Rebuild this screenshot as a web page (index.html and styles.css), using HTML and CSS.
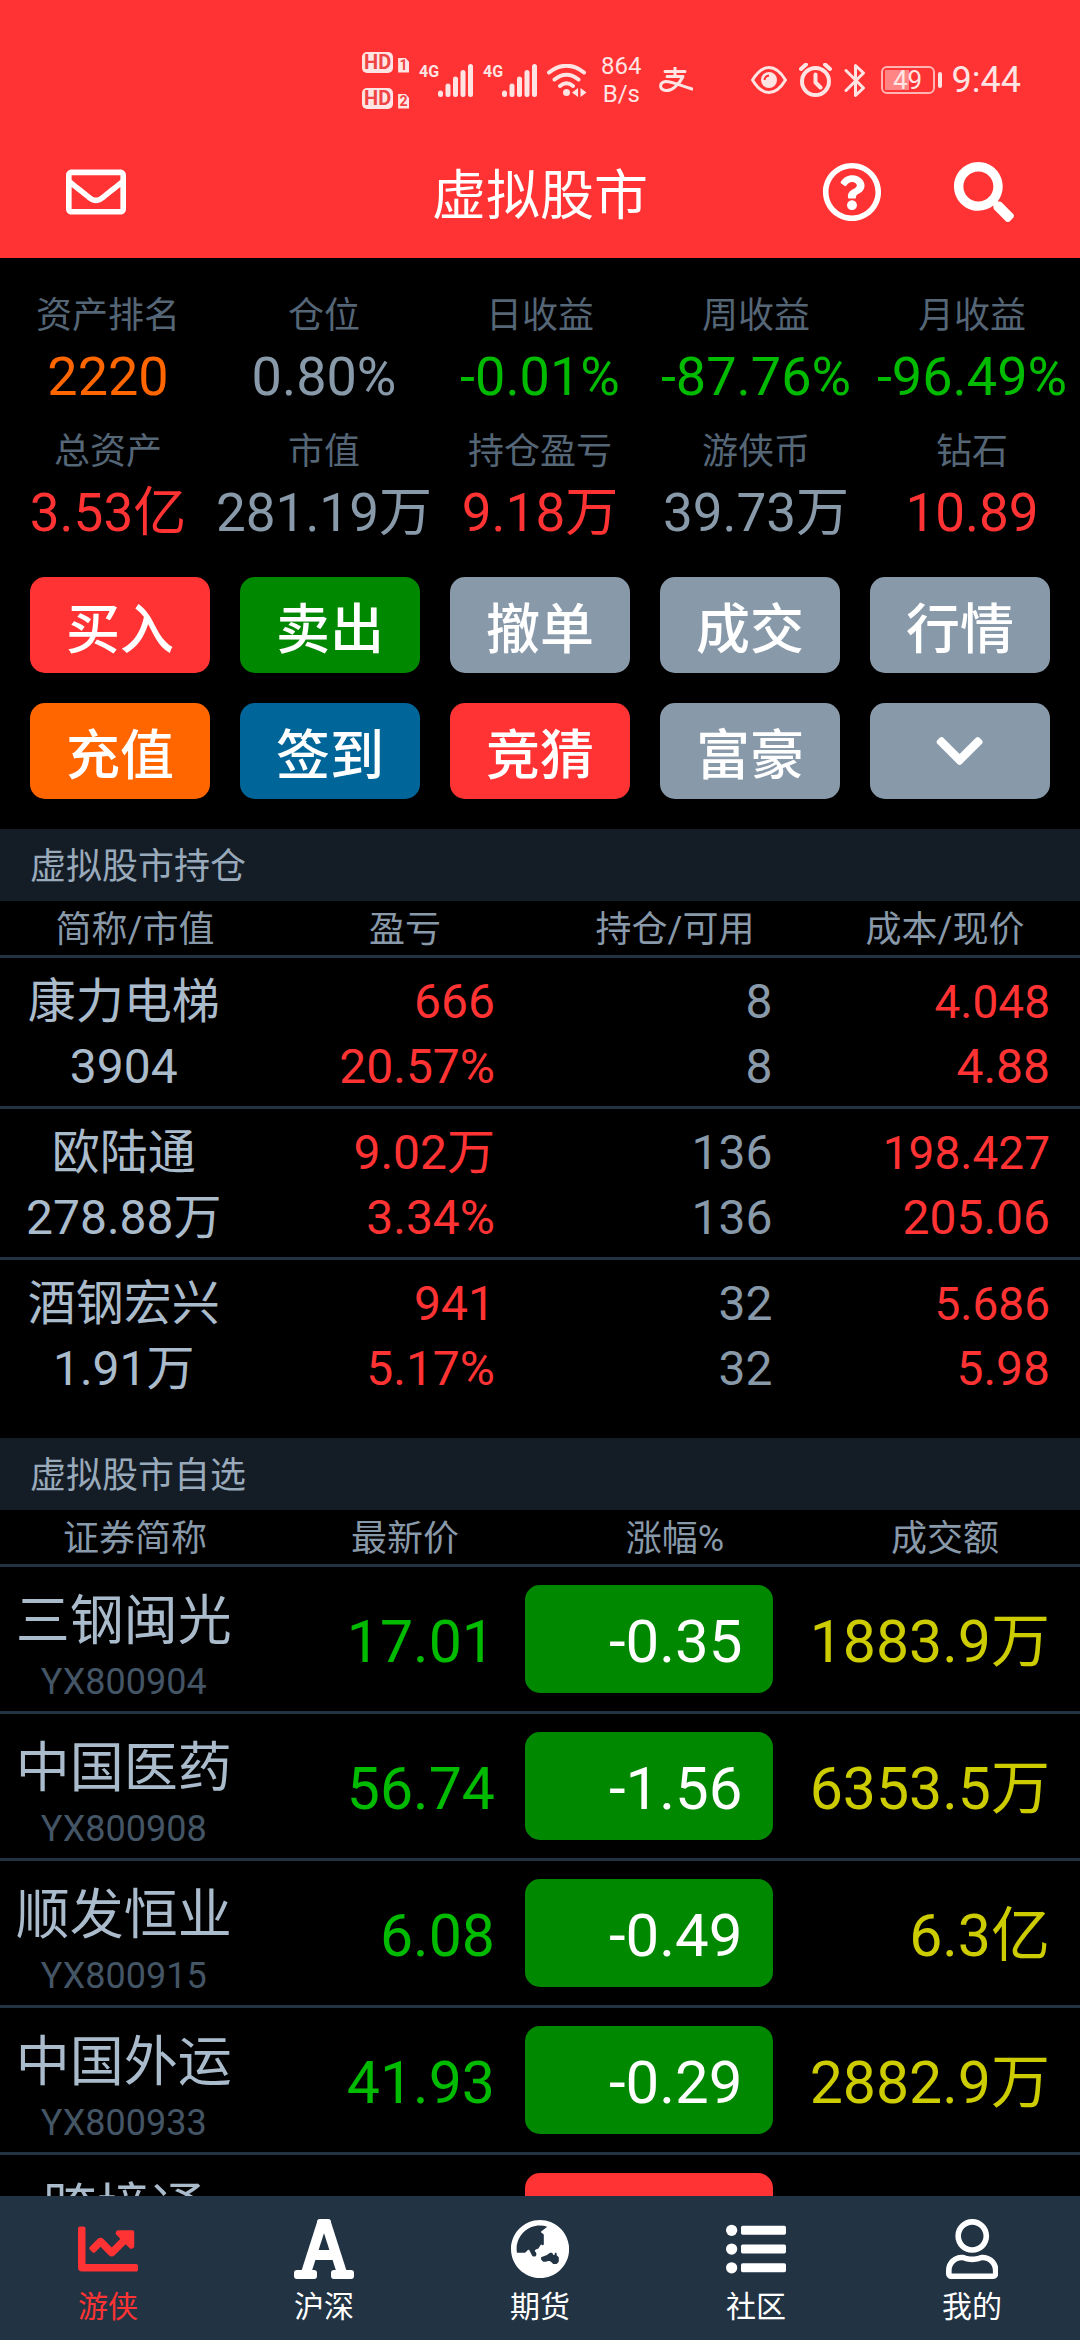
FILE: index.html
```html
<!DOCTYPE html>
<html lang="zh-CN">
<head>
<meta charset="utf-8">
<meta name="viewport" content="width=device-width, initial-scale=1.0">
<title>虚拟股市</title>
<link rel="stylesheet" href="styles.css">
</head>

<body>

  <header class="header">
    <div class="status">
      <div class="hd-group">
        <div class="hd-row"><span class="hd">HD</span><span class="sim">1</span></div>
        <div class="hd-row"><span class="hd">HD</span><span class="sim">2</span></div>
      </div>
      <div class="signal">
        <span class="signal-type">4G</span>
        <svg width="35" height="33" viewBox="0 0 35 33"><path d="M2.5 29v1.500M10 22v8.500M17.500 15v15.500M25 8.500v22M32.500 2.500v28" /></svg>
      </div>
      <div class="signal">
        <span class="signal-type">4G</span>
        <svg width="35" height="33" viewBox="0 0 35 33"><path d="M2.5 29v1.500M10 22v8.500M17.500 15v15.500M25 8.500v22M32.500 2.500v28" /></svg>
      </div>
      <svg class="wifi" width="40" height="33" viewBox="0 0 40 33">
        <path class="line" d="M2 8.500Q19.500-5 37 8.500M7.500 15.500Q19.500 6 31.500 15.500M13 22Q19.500 16.500 26 22" />
        <circle cx="19.500" cy="28.500" r="3.500" />
        <path d="M31 24v9l-6-4.500zM33.500 24l6 4.500-6 4.500z" />
      </svg>
      <div class="speed">864<br>B/s</div>
      <svg class="alipay" width="34" height="26" viewBox="0 0 34 26">
        <path class="line" d="M6 4.500h20M16 0v9.500M8 9.500h16C20 18 12 24.500 6.500 23.500 0 22.500 0 15.500 6.500 14.500 13 14 22 19 33 22" />
      </svg>
      <svg class="eye" width="36" height="28" viewBox="0 0 36 28">
        <path class="line" d="M1.500 14Q9 1.500 18 1.500T34.500 14Q27 26.500 18 26.500T1.500 14z" />
        <circle cx="18" cy="14" r="8" />
        <path class="glint" d="M13.500 14q.5-4 4.500-4.500" />
      </svg>
      <svg class="alarm" width="33" height="34" viewBox="0 0 33 34">
        <circle class="line" cx="16.500" cy="18.500" r="13.500" />
        <path class="line" d="M16.500 11.500v8l5 5M2 6l5-4.500M31 6l-5-4.500" />
      </svg>
      <svg class="bluetooth" width="22" height="35" viewBox="0 0 22 35">
        <path class="line" d="M2 7.500l17.500 17.500-8 7.500V2.500l8 7.500L2 27.500" />
      </svg>
      <div class="battery"><span class="battery-box">49</span><span class="battery-nub"></span></div>
      <span class="clock">9:44</span>
    </div>

    <div class="titlebar">
      <button class="icon-button" aria-label="消息">
        <svg viewBox="0 0 512 512"><path d="M464 64H48C21.49 64 0 85.49 0 112v288c0 26.51 21.49 48 48 48h416c26.51 0 48-21.49 48-48V112c0-26.51-21.49-48-48-48zm0 48v40.805c-22.422 18.259-58.168 46.651-134.587 106.49-16.841 13.247-50.201 45.072-73.413 44.701-23.208.375-56.579-31.459-73.413-44.701C106.18 199.465 70.425 171.067 48 152.805V112h416zM48 400V214.398c22.914 18.251 55.409 43.862 104.938 82.646 21.857 17.205 60.134 55.186 103.062 54.955 42.717.231 80.509-37.199 103.053-54.947 49.528-38.783 82.032-64.401 104.947-82.653V400H48z"/></svg>
      </button>
      <h1 class="title">虚拟股市</h1>
      <div class="titlebar-right">
        <button class="icon-button" aria-label="帮助">
          <svg viewBox="0 0 512 512"><path d="M256 8C119.043 8 8 119.083 8 256c0 136.997 111.043 248 248 248s248-111.003 248-248C504 119.083 392.957 8 256 8zm0 448c-110.532 0-200-89.431-200-200 0-110.495 89.472-200 200-200 110.491 0 200 89.471 200 200 0 110.530-89.431 200-200 200zm107.244-255.200c0 67.052-72.421 68.084-72.421 92.863V300c0 6.627-5.373 12-12 12h-45.647c-6.627 0-12-5.373-12-12v-8.659c0-35.745 27.100-50.034 47.579-61.516 17.561-9.845 28.324-16.541 28.324-29.579 0-17.246-21.999-28.693-39.784-28.693-23.189 0-33.894 10.977-48.942 29.969-4.057 5.120-11.460 6.071-16.666 2.124l-27.824-21.098c-5.107-3.872-6.251-11.066-2.644-16.363C184.846 131.491 214.940 112 261.794 112c49.071 0 101.450 38.304 101.450 88.800zM298 368c0 23.159-18.841 42-42 42s-42-18.841-42-42 18.841-42 42-42 42 18.841 42 42z"/></svg>
        </button>
        <button class="icon-button" aria-label="搜索">
          <svg viewBox="0 0 512 512"><path d="M505 442.700L405.300 343c-4.500-4.500-10.600-7-17-7H372c27.600-35.300 44-79.700 44-128C416 93.100 322.900 0 208 0S0 93.100 0 208s93.100 208 208 208c48.300 0 92.700-16.400 128-44v16.300c0 6.400 2.500 12.500 7 17l99.700 99.700c9.400 9.400 24.600 9.400 33.900 0l28.300-28.300c9.400-9.400 9.400-24.600.1-34zM208 336c-70.700 0-128-57.200-128-128 0-70.700 57.200-128 128-128 70.700 0 128 57.200 128 128 0 70.700-57.200 128-128 128z"/></svg>
        </button>
      </div>
    </div>
  </header>

  <main class="content">
    <dl class="stats">
      <div><dt>资产排名</dt><dd class="orange">2220</dd></div>
      <div><dt>仓位</dt><dd>0.80%</dd></div>
      <div><dt>日收益</dt><dd class="green">-0.01%</dd></div>
      <div><dt>周收益</dt><dd class="green">-87.76%</dd></div>
      <div><dt>月收益</dt><dd class="green">-96.49%</dd></div>
      <div><dt>总资产</dt><dd class="amount red">3.53亿</dd></div>
      <div><dt>市值</dt><dd class="amount">281.19万</dd></div>
      <div><dt>持仓盈亏</dt><dd class="amount red">9.18万</dd></div>
      <div><dt>游侠币</dt><dd class="amount">39.73万</dd></div>
      <div><dt>钻石</dt><dd class="amount red">10.89</dd></div>
    </dl>

    <div class="actions">
      <button class="bg-red">买入</button>
      <button class="bg-green">卖出</button>
      <button>撤单</button>
      <button>成交</button>
      <button>行情</button>
      <button class="bg-orange">充值</button>
      <button class="bg-blue">签到</button>
      <button class="bg-red">竞猜</button>
      <button>富豪</button>
      <button aria-label="更多">
        <svg viewBox="0 0 448 512"><path d="M207.029 381.476L12.686 187.132c-9.373-9.373-9.373-24.569 0-33.941l22.667-22.667c9.357-9.357 24.522-9.375 33.901-.04L224 284.505l154.745-154.021c9.379-9.335 24.544-9.317 33.901.04l22.667 22.667c9.373 9.373 9.373 24.569 0 33.941L240.971 381.476c-9.373 9.372-24.569 9.372-33.942 0z"/></svg>
      </button>
    </div>

    <h2 class="section">虚拟股市持仓</h2>
    <table class="holdings">
      <thead>
        <tr><th>简称/市值</th><th>盈亏</th><th>持仓/可用</th><th>成本/现价</th></tr>
      </thead>
      <tbody>
        <tr>
          <td>康力电梯<br>3904</td>
          <td class="red">666<br>20.57%</td>
          <td>8<br>8</td>
          <td class="red"><span class="cost">4.048</span><br>4.88</td>
        </tr>
        <tr>
          <td>欧陆通<br>278.88万</td>
          <td class="red">9.02万<br>3.34%</td>
          <td>136<br>136</td>
          <td class="red"><span class="cost">198.427</span><br>205.06</td>
        </tr>
        <tr>
          <td>酒钢宏兴<br>1.91万</td>
          <td class="red">941<br>5.17%</td>
          <td>32<br>32</td>
          <td class="red"><span class="cost">5.686</span><br>5.98</td>
        </tr>
      </tbody>
    </table>

    <h2 class="section">虚拟股市自选</h2>
    <table class="watchlist">
      <thead>
        <tr><th>证券简称</th><th>最新价</th><th>涨幅%</th><th>成交额</th></tr>
      </thead>
      <tbody>
        <tr>
          <td><div class="name">三钢闽光</div><div class="code">YX800904</div></td>
          <td class="green">17.01</td>
          <td><div class="pill bg-green">-0.35</div></td>
          <td class="yellow">1883.9万</td>
        </tr>
        <tr>
          <td><div class="name">中国医药</div><div class="code">YX800908</div></td>
          <td class="green">56.74</td>
          <td><div class="pill bg-green">-1.56</div></td>
          <td class="yellow">6353.5万</td>
        </tr>
        <tr>
          <td><div class="name">顺发恒业</div><div class="code">YX800915</div></td>
          <td class="green">6.08</td>
          <td><div class="pill bg-green">-0.49</div></td>
          <td class="yellow">6.3亿</td>
        </tr>
        <tr>
          <td><div class="name">中国外运</div><div class="code">YX800933</div></td>
          <td class="green">41.93</td>
          <td><div class="pill bg-green">-0.29</div></td>
          <td class="yellow">2882.9万</td>
        </tr>
        <tr>
          <td><div class="name">跨境通</div><div class="code"></div></td>
          <td></td>
          <td><div class="pill bg-red"></div></td>
          <td></td>
        </tr>
      </tbody>
    </table>
  </main>

  <nav class="tabs">
    <a href="#" class="active">
      <svg viewBox="0 0 512 512"><path d="M496 384H64V80c0-8.840-7.160-16-16-16H16C7.160 64 0 71.160 0 80v336c0 17.670 14.330 32 32 32h464c8.840 0 16-7.160 16-16v-32c0-8.840-7.160-16-16-16zM464 96H345.940c-21.380 0-32.090 25.850-16.970 40.970l32.400 32.400L288 242.750l-73.370-73.370c-12.500-12.500-32.760-12.500-45.250 0l-68.690 68.690c-6.250 6.250-6.250 16.380 0 22.630l22.620 22.620c6.250 6.250 16.380 6.250 22.630 0L192 237.250l73.370 73.370c12.500 12.500 32.760 12.500 45.250 0l96-96 32.400 32.400c15.120 15.120 40.970 4.410 40.970-16.970V112c.01-8.840-7.150-16-15.990-16z"/></svg>
      <span>游侠</span>
    </a>
    <a href="#">
      <svg viewBox="0 0 60 60">
        <g class="strokes"><line x1="28" y1="4" x2="12" y2="54"/><line x1="32" y1="4" x2="48" y2="54"/><line x1="19" y1="36" x2="41" y2="36"/></g>
        <rect x="23" y="0" width="14" height="12" rx="3"/><rect x="0" y="51" width="23" height="9" rx="3"/><rect x="37" y="51" width="23" height="9" rx="3"/>
      </svg>
      <span>沪深</span>
    </a>
    <a href="#">
      <svg viewBox="0 0 496 512"><path d="M248 8C111.030 8 0 119.030 0 256s111.030 248 248 248 248-111.030 248-248S384.970 8 248 8zm-11.340 240.230c-2.890 4.820-8.100 7.770-13.720 7.770h-.31c-4.240 0-8.310 1.690-11.310 4.690l-5.660 5.660c-3.120 3.120-3.120 8.190 0 11.310l5.660 5.660c3 3 4.690 7.070 4.690 11.310V304c0 8.840-7.160 16-16 16h-6.110c-6.060 0-11.600-3.420-14.310-8.850l-22.620-45.230c-2.440-4.880-8.950-5.940-12.810-2.080l-19.470 19.460c-3 3-7.070 4.690-11.310 4.690H50.810C49.120 277.550 48 266.920 48 256c0-110.280 89.720-200 200-200 21.510 0 42.200 3.510 61.630 9.820l-50.160 38.530c-5.110 3.410-4.630 11.060.86 13.810l10.830 5.410c5.420 2.710 8.840 8.250 8.840 14.310V216c0 4.420-3.580 8-8 8h-3.060c-3.030 0-5.800-1.710-7.150-4.420-1.560-3.120-5.960-3.290-7.760-.3l-17.370 28.950zM408 358.430c0 4.240-1.690 8.310-4.690 11.310l-9.570 9.570c-3 3-7.070 4.690-11.310 4.690h-15.160c-4.240 0-8.310-1.690-11.310-4.690l-13.010-13.010a26.767 26.767 0 0 0-25.420-7.040l-21.270 5.320c-1.270.32-2.570.48-3.880.48h-10.340c-4.240 0-8.310-1.690-11.310-4.690l-11.910-11.910a8.008 8.008 0 0 1-2.340-5.660v-10.200c0-3.270 1.990-6.210 5.030-7.430l39.340-15.740c1.980-.79 3.860-1.820 5.590-3.050l23.710-16.890a7.978 7.978 0 0 1 4.640-1.480h12.090c3.230 0 6.150 1.940 7.390 4.930l5.350 12.850a4 4 0 0 0 3.690 2.460h3.800c1.780 0 3.350-1.180 3.840-2.880l4.200-14.470c.5-1.710 2.060-2.880 3.840-2.880h6.060c2.210 0 4 1.790 4 4v12.930c0 2.120.84 4.160 2.340 5.660l11.910 11.910c3 3 4.690 7.070 4.690 11.310v24.600z"/></svg>
      <span>期货</span>
    </a>
    <a href="#">
      <svg viewBox="0 0 512 512">
        <circle cx="48" cy="96" r="48"/><circle cx="48" cy="256" r="48"/><circle cx="48" cy="416" r="48"/>
        <rect x="128" y="58" width="384" height="76" rx="14"/><rect x="128" y="218" width="384" height="76" rx="14"/><rect x="128" y="378" width="384" height="76" rx="14"/>
      </svg>
      <span>社区</span>
    </a>
    <a href="#">
      <svg viewBox="0 0 448 512"><path d="M313.600 304c-28.700 0-42.500 16-89.600 16-47.100 0-60.800-16-89.600-16C60.200 304 0 364.200 0 438.400V464c0 26.500 21.500 48 48 48h352c26.500 0 48-21.500 48-48v-25.600c0-74.200-60.200-134.400-134.400-134.400zM400 464H48v-25.600c0-47.600 38.800-86.400 86.400-86.400 14.600 0 38.300 16 89.600 16 51.700 0 74.900-16 89.600-16 47.600 0 86.400 38.800 86.400 86.400V464zM224 288c79.500 0 144-64.500 144-144S303.500 0 224 0 80 64.500 80 144s64.500 144 144 144zm0-240c52.900 0 96 43.100 96 96s-43.100 96-96 96-96-43.100-96-96 43.100-96 96-96z"/></svg>
      <span>我的</span>
    </a>
  </nav>

</body>
</html>
```

FILE: styles.css
```css
html, body {
  height: 100%;
  margin: 0;
  padding: 0;
  overflow: hidden;
}

body {
  display: flex;
  flex-direction: column;
  background: #000;
  color: #89a;
  font-family: Roboto, "Noto Sans CJK SC", sans-serif;
}

h1, h2, dl, dd {
  margin: 0;
  font-weight: normal;
}

button {
  border: none;
  padding: 0;
  color: #fff;
  font-family: inherit;
  cursor: pointer;
}

svg {
  display: block;
  fill: currentColor;
}

.red { color: #f33; }
.green { color: #0b0; }
.orange { color: #f60; }
.yellow { color: #cc0; }

/* header */

.header {
  flex: none;
  background: #f33;
  color: #fff;
}

.status {
  display: flex;
  justify-content: flex-end;
  align-items: center;
  height: 100px;
  padding: 30px 59px 0 0;
  color: #ffe4e4;
}

.line {
  fill: none;
  stroke: currentColor;
  stroke-width: 3;
  stroke-linecap: round;
  stroke-linejoin: round;
}

.hd-group {
  display: flex;
  flex-direction: column;
  gap: 15px;
  margin-right: 10px;
}

.hd-row {
  display: flex;
  align-items: flex-end;
  gap: 5px;
}

.hd {
  width: 31px;
  border-radius: 5px;
  background: #ffe4e4;
  color: #e44;
  font-size: 20px;
  font-weight: bold;
  line-height: 21px;
  text-align: center;
}

.sim {
  width: 11px;
  background: #ffe4e4;
  color: #e44;
  font-size: 14px;
  font-weight: bold;
  line-height: 15px;
  text-align: center;
  clip-path: polygon(0 0, 65% 0, 100% 30%, 100% 100%, 0 100%);
}

.signal {
  display: flex;
  align-items: flex-start;
  margin-right: 10px;
}

.signal-type {
  width: 19px;
  font-size: 16px;
  font-weight: bold;
  line-height: 16px;
}

.signal svg {
  fill: none;
  stroke: currentColor;
  stroke-width: 5;
  stroke-linecap: round;
}

.wifi .line {
  stroke-width: 4;
}

.speed {
  margin: 0 17px 0 14px;
  font-size: 24px;
  line-height: 28px;
  text-align: center;
}

.eye {
  margin: 0 12px 0 58px;
}

.glint {
  fill: none;
  stroke: #f33;
  stroke-width: 2;
}

.alarm .line {
  stroke-width: 4;
}

.bluetooth {
  margin: 0 15px 0 12px;
}

.battery {
  display: flex;
  align-items: center;
  gap: 3px;
  margin-right: 10px;
}

.battery-box {
  width: 50px;
  border: 2px solid #ffb4b4;
  border-radius: 6px;
  background: linear-gradient(to right, #ff8585 24px, transparent 24px) 2px 2px / 46px 20px no-repeat;
  font-size: 26px;
  line-height: 24px;
  text-align: center;
}

.battery-nub {
  width: 4px;
  height: 16px;
  border-radius: 2px;
  background: #ffe4e4;
}

.clock {
  font-size: 36px;
}

.titlebar {
  display: grid;
  grid-template-columns: 1fr auto 1fr;
  align-items: center;
  height: 128px;
  padding: 0 66px 5px;
  box-sizing: border-box;
}

.title {
  padding-top: 10px;
  font-size: 54px;
  line-height: 80px;
}

.titlebar-right {
  display: flex;
  justify-content: flex-end;
  gap: 72px;
}

.icon-button {
  width: 60px;
  height: 60px;
  background: none;
}

/* account figures */

.content {
  flex: 1;
  min-height: 0;
  overflow: hidden;
}

.stats {
  display: grid;
  grid-template-columns: repeat(5, 1fr);
  row-gap: 14px;
  padding: 31px 0 30px;
  text-align: center;
  white-space: nowrap;
}

.stats dt {
  color: #567;
  font-size: 36px;
  line-height: 54px;
}

.stats dd {
  font-size: 54px;
  line-height: 68px;
}

.stats .amount {
  font-size: 53px;
}

.actions {
  display: grid;
  grid-template-columns: repeat(5, 1fr);
  gap: 30px;
  padding: 0 30px 30px;
}

.actions button {
  display: flex;
  justify-content: center;
  align-items: center;
  height: 96px;
  border-radius: 15px;
  background: #89a;
  font-size: 54px;
  font-weight: 500;
}

.actions svg {
  height: 54px;
}

.actions .bg-red, .bg-red { background: #f33; }
.actions .bg-green, .bg-green { background: #080; }
.actions .bg-orange { background: #f60; }
.actions .bg-blue { background: #069; }

/* tables */

.section {
  padding: 4px 30px 0;
  background: #141c26;
  color: #9ab;
  font-size: 36px;
  line-height: 68px;
}

table, thead, tbody {
  display: block;
}

tr {
  display: flex;
  border-bottom: 3px solid #234;
}

tbody tr:last-child {
  border-bottom: none;
}

th, td {
  flex: 1 0 0;
  padding: 0;
}

th {
  padding-top: 4px;
  font-size: 36px;
  font-weight: normal;
  line-height: 50px;
}

td {
  padding-right: 30px;
  text-align: right;
  white-space: nowrap;
}

td:first-child {
  padding-right: 0;
  color: #abc;
  text-align: center;
}

.holdings {
  padding-bottom: 30px;
}

.holdings td {
  padding-top: 11px;
  padding-bottom: 7px;
  font-size: 48px;
  line-height: 65px;
}

/* long cost prices run a little smaller, without growing the line */
.holdings .cost {
  font-size: 46px;
  line-height: 50px;
}

.watchlist tbody tr {
  align-items: center;
  height: 144px;
}

.watchlist td {
  height: 108px;
  font-size: 59px;
  line-height: 114px;
}

.watchlist td:first-child {
  height: auto;
  padding-top: 8px;
}

.watchlist .name {
  font-size: 54px;
  line-height: 78px;
}

.watchlist .code {
  height: 42px;
  color: #456;
  font-size: 36px;
  line-height: 42px;
}

.pill {
  height: 108px;
  padding-right: 30px;
  border-radius: 15px;
  color: #fff;
  font-size: 60px;
}

/* bottom tabs */

.tabs {
  flex: none;
  display: flex;
  height: 144px;
  background: #234;
}

.tabs a {
  flex: 1;
  display: flex;
  flex-direction: column;
  align-items: center;
  padding-top: 23px;
  color: #fff;
  font-size: 30px;
  line-height: 46px;
  text-decoration: none;
}

.tabs .active {
  color: #f33;
}

.tabs svg {
  height: 60px;
  margin-bottom: 5px;
}

.strokes {
  stroke: currentColor;
  stroke-width: 10;
}
```
